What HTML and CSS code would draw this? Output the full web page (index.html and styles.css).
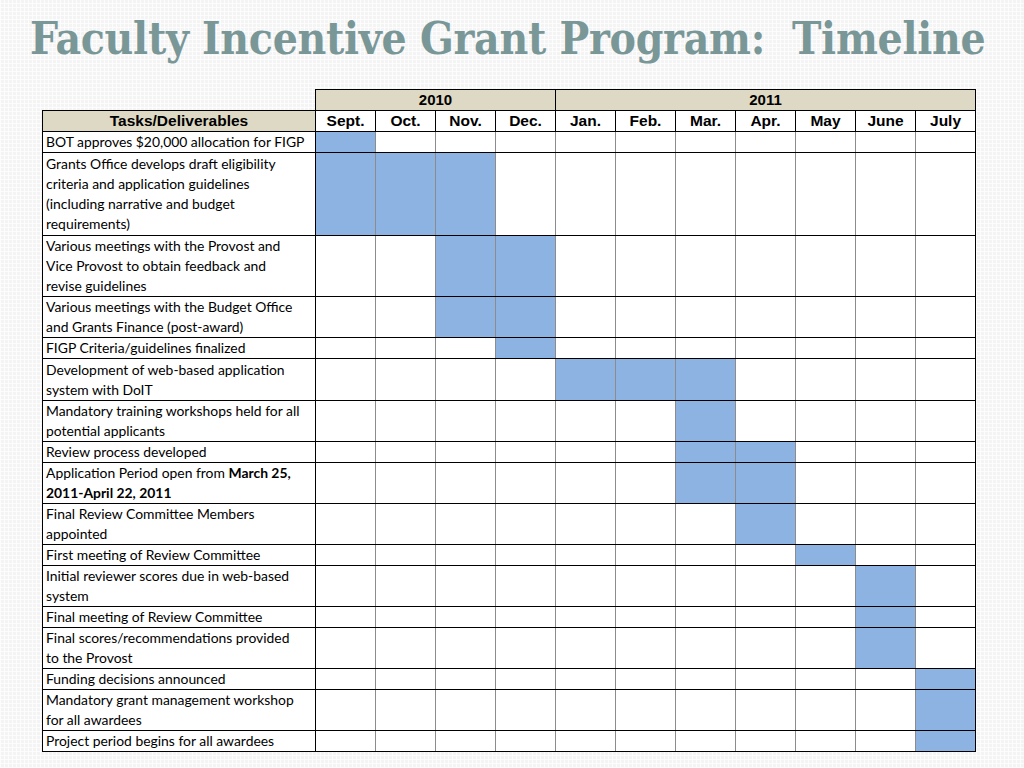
FILE: index.html
```html
<!DOCTYPE html>
<html lang="en">
<head>
<meta charset="utf-8">
<title>Faculty Incentive Grant Program: Timeline</title>
<link rel="stylesheet" href="styles.css">
</head>
<body>
<div class="slide">
  <h1 class="title">Faculty Incentive Grant Program:&nbsp; Timeline</h1>
  <table class="gantt">
    <colgroup>
      <col class="c-task">
      <col class="c-m"><col class="c-m"><col class="c-m"><col class="c-m">
      <col class="c-m"><col class="c-m"><col class="c-m"><col class="c-m">
      <col class="c-m"><col class="c-m"><col class="c-m">
    </colgroup>
    <thead>
      <tr class="yr">
        <th class="blank"></th>
        <th colspan="4">2010</th>
        <th colspan="7">2011</th>
      </tr>
      <tr class="mo">
        <th class="task-h">Tasks/Deliverables</th>
        <th>Sept.</th><th>Oct.</th><th>Nov.</th><th>Dec.</th>
        <th>Jan.</th><th>Feb.</th><th>Mar.</th><th>Apr.</th><th>May</th><th>June</th><th>July</th>
      </tr>
    </thead>
    <tbody>
      <tr class="h1"><td class="task">BOT approves $20,000 allocation for FIGP</td><td class="on"></td><td></td><td></td><td></td><td></td><td></td><td></td><td></td><td></td><td></td><td></td></tr>
      <tr class="h4"><td class="task">Grants Office develops draft eligibility<br>criteria and application guidelines<br>(including narrative and budget<br>requirements)</td><td class="on"></td><td class="on"></td><td class="on"></td><td></td><td></td><td></td><td></td><td></td><td></td><td></td><td></td></tr>
      <tr class="h3"><td class="task">Various meetings with the Provost and<br>Vice Provost to obtain feedback and<br>revise guidelines</td><td></td><td></td><td class="on"></td><td class="on"></td><td></td><td></td><td></td><td></td><td></td><td></td><td></td></tr>
      <tr class="h2"><td class="task">Various meetings with the Budget Office<br>and Grants Finance (post-award)</td><td></td><td></td><td class="on"></td><td class="on"></td><td></td><td></td><td></td><td></td><td></td><td></td><td></td></tr>
      <tr class="h1"><td class="task">FIGP Criteria/guidelines finalized</td><td></td><td></td><td></td><td class="on"></td><td></td><td></td><td></td><td></td><td></td><td></td><td></td></tr>
      <tr class="h2"><td class="task">Development of web-based application<br>system with DoIT</td><td></td><td></td><td></td><td></td><td class="on"></td><td class="on"></td><td class="on"></td><td></td><td></td><td></td><td></td></tr>
      <tr class="h2"><td class="task">Mandatory training workshops held for all<br>potential applicants</td><td></td><td></td><td></td><td></td><td></td><td></td><td class="on"></td><td></td><td></td><td></td><td></td></tr>
      <tr class="h1"><td class="task">Review process developed</td><td></td><td></td><td></td><td></td><td></td><td></td><td class="on"></td><td class="on"></td><td></td><td></td><td></td></tr>
      <tr class="h2"><td class="task">Application Period open from <b>March 25,<br>2011-April 22, 2011</b></td><td></td><td></td><td></td><td></td><td></td><td></td><td class="on"></td><td class="on"></td><td></td><td></td><td></td></tr>
      <tr class="h2"><td class="task">Final Review Committee Members<br>appointed</td><td></td><td></td><td></td><td></td><td></td><td></td><td></td><td class="on"></td><td></td><td></td><td></td></tr>
      <tr class="h1"><td class="task">First meeting of Review Committee</td><td></td><td></td><td></td><td></td><td></td><td></td><td></td><td></td><td class="on"></td><td></td><td></td></tr>
      <tr class="h2"><td class="task">Initial reviewer scores due in web-based<br>system</td><td></td><td></td><td></td><td></td><td></td><td></td><td></td><td></td><td></td><td class="on"></td><td></td></tr>
      <tr class="h1"><td class="task">Final meeting of Review Committee</td><td></td><td></td><td></td><td></td><td></td><td></td><td></td><td></td><td></td><td class="on"></td><td></td></tr>
      <tr class="h2"><td class="task">Final scores/recommendations provided<br>to the Provost</td><td></td><td></td><td></td><td></td><td></td><td></td><td></td><td></td><td></td><td class="on"></td><td></td></tr>
      <tr class="h1"><td class="task">Funding decisions announced</td><td></td><td></td><td></td><td></td><td></td><td></td><td></td><td></td><td></td><td></td><td class="on"></td></tr>
      <tr class="h2"><td class="task">Mandatory grant management workshop<br>for all awardees</td><td></td><td></td><td></td><td></td><td></td><td></td><td></td><td></td><td></td><td></td><td class="on"></td></tr>
      <tr class="h1"><td class="task">Project period begins for all awardees</td><td></td><td></td><td></td><td></td><td></td><td></td><td></td><td></td><td></td><td></td><td class="on"></td></tr>
    </tbody>
  </table>
</div>
</body>
</html>
```
FILE: styles.css
```css
html, body {
  margin: 0;
  padding: 0;
}
body {
  width: 1024px;
  height: 768px;
  overflow: hidden;
  background-color: #f4f4f4;
  background-image:
    linear-gradient(90deg, rgba(255,255,255,0.7) 1px, transparent 1px),
    linear-gradient(0deg, rgba(255,255,255,0.7) 1px, transparent 1px);
  background-size: 4px 4px;
}
.slide {
  padding: 12px 0 0 42px;
}
.title {
  margin: 0 0 0 -12px;
  height: 77px;
  font-family: "DejaVu Serif Condensed", "DejaVu Serif", "Liberation Serif", serif;
  font-stretch: condensed;
  font-weight: bold;
  font-size: 44px;
  line-height: 54px;
  color: #7a9798;
  white-space: nowrap;
  letter-spacing: -0.28px;
}
.gantt {
  border-collapse: collapse;
  table-layout: fixed;
  width: 933px;
}
.c-task { width: 273px; }
.c-m { width: 60px; }
.gantt th {
  font-family: "Liberation Sans", Arial, sans-serif;
  font-weight: bold;
  font-size: 15.5px;
  color: #000;
  padding: 0;
  text-align: center;
  border: 1px solid #000;
  background: #fff;
  white-space: nowrap;
}
.gantt .yr th {
  background: #ddd9c4;
  height: 20px;
  font-size: 15px;
  line-height: 20px;
}
.gantt .yr th.blank {
  background: transparent;
  border: none;
  border-bottom: 1px solid #000;
}
.gantt .mo th {
  height: 20px;
  line-height: 20px;
}
.gantt .mo th.task-h {
  background: #ddd9c4;
}
.gantt td {
  padding: 0;
  background: #fff;
  border-top: 1px solid #000;
  border-bottom: 1px solid #000;
  border-left: 1px solid #8c8c8c;
  border-right: 1px solid #8c8c8c;
}
.gantt td:last-child {
  border-right: 1px solid #000;
}
.gantt td.task {
  border-left: 1px solid #000;
  border-right: 1px solid #000;
  font-family: "Lato", "Open Sans", sans-serif;
  font-size: 13.9px;
  line-height: 20px;
  color: #000;
  padding: 0 0 0 3px;
  vertical-align: middle;
  white-space: nowrap;
  overflow: hidden;
}
.gantt td.task b {
  font-weight: bold;
}
.gantt td.on {
  background: #8db3e2;
}
.gantt tr.h1 td { height: 19px; }
.gantt tr.h2 td { height: 40.1px; }
.gantt tr.h3 td { height: 60.7px; }
.gantt tr.h4 td { height: 81.7px; }
```
